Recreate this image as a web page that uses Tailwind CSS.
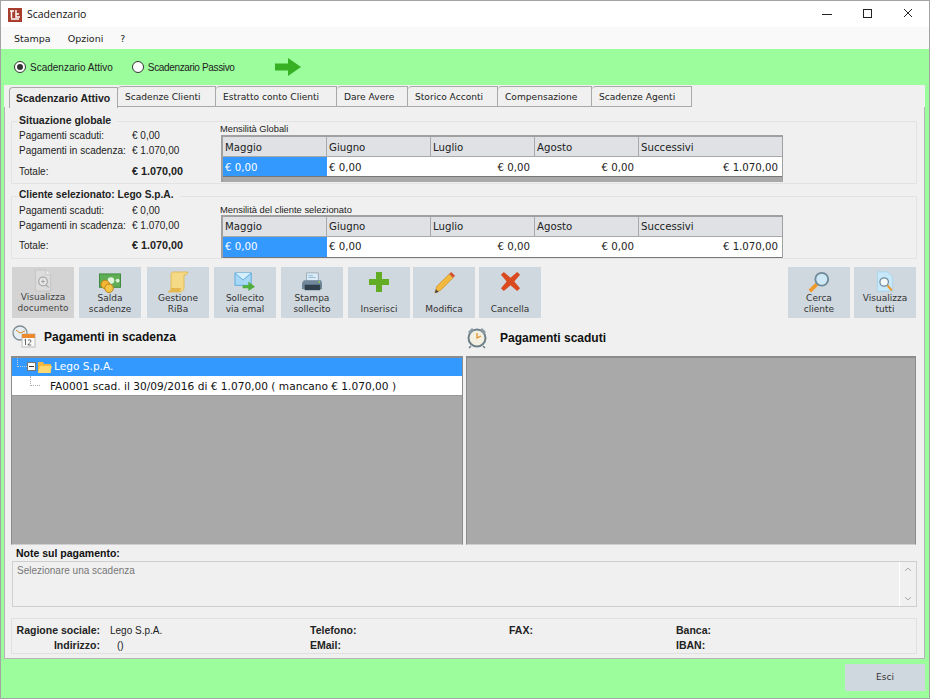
<!DOCTYPE html>
<html lang="it">
<head>
  <meta charset="UTF-8">
  <title>Scadenzario</title>
  <script src="https://cdn.jsdelivr.net/npm/@tailwindcss/browser@4"></script>
</head>
<body class="w-[930px] h-[699px] overflow-hidden bg-[#9bfd9b] font-['Liberation_Sans',sans-serif] text-[10px] text-[#222]">
<div class="w-[930px] h-[699px] border border-[#a3a3a3] flex flex-col">

  <!-- title bar -->
  <div class="h-[26px] bg-white flex items-center shrink-0">
    <svg class="ml-[7px] mt-[1px]" width="14" height="14" viewBox="0 0 14 14"><rect width="14" height="14" fill="#a83f2e"/><path d="M2 3h4M3.500 3v7M8 2v7h4M8 6h3M3 11h8" stroke="#fff" stroke-width="1.400" fill="none"/></svg>
    <span class="ml-[5px] mt-[1px] text-[10.500px] font-['Open_Sans',sans-serif] text-[#111]">Scadenzario</span>
    <svg class="ml-auto" width="120" height="26" viewBox="0 0 120 26"><path d="M13 13.500h10" stroke="#222"/><rect x="54.500" y="8.500" width="8" height="8" fill="none" stroke="#222"/><path d="M95 8l8 8M103 8l-8 8" stroke="#222"/></svg>
  </div>

  <!-- menu -->
  <div class="h-[22px] bg-[#f9f9f9] flex items-center pl-[13px] pt-[3px] font-['DejaVu_Sans',sans-serif] text-[9.500px] shrink-0">
    <span>Stampa</span><span class="ml-[17px]">Opzioni</span><span class="ml-[17px]">?</span>
  </div>

  <!-- radios -->
  <div class="h-[36px] flex items-center pl-[13px] shrink-0">
    <span class="w-[12px] h-[12px] rounded-full border border-[#333] bg-white flex items-center justify-center"><span class="w-[6px] h-[6px] rounded-full bg-[#333]"></span></span>
    <span class="ml-[4px]">Scadenzario Attivo</span>
    <span class="ml-[19px] w-[12px] h-[12px] rounded-full border border-[#333] bg-white"></span>
    <span class="ml-[4px] tracking-[-0.35px]">Scadenzario Passivo</span>
    <svg class="ml-[40px]" width="26" height="18" viewBox="0 0 26 18"><path d="M0 5.500h13V0l13 9-13 9v-5.500H0z" fill="#37b024"/></svg>
  </div>

  <!-- tab panel -->
  <div class="ml-[3px] w-[921px] h-[574px] bg-[#f0f0f0] shrink-0 flex flex-col">
    <div class="h-[22px] flex items-end pl-[5px] shrink-0 font-['DejaVu_Sans',sans-serif] text-[9.100px] whitespace-nowrap">
      <div class="w-[109px] h-[21px] bg-[#f0f0f0] border border-b-0 border-[#a9a9a9] rounded-tl-[4px] font-['Liberation_Sans',sans-serif] text-[10.500px] font-bold flex items-center pl-[6px] pt-[1px] z-10 -mb-px">Scadenzario Attivo</div>
      <div class="w-[98px] h-[21px] border-t border-r border-b border-[#a9a9a9] rounded-tl-[4px] flex items-center pl-[7px] pt-[3px]">Scadenze Clienti</div>
      <div class="w-[121px] h-[21px] border-t border-r border-b border-[#a9a9a9] rounded-tl-[4px] flex items-center pl-[7px] pt-[3px]">Estratto conto Clienti</div>
      <div class="w-[71px] h-[21px] border-t border-r border-b border-[#a9a9a9] rounded-tl-[4px] flex items-center pl-[7px] pt-[3px]">Dare Avere</div>
      <div class="w-[90px] h-[21px] border-t border-r border-b border-[#a9a9a9] rounded-tl-[4px] flex items-center pl-[7px] pt-[3px]">Storico Acconti</div>
      <div class="w-[94px] h-[21px] border-t border-r border-b border-[#a9a9a9] rounded-tl-[4px] flex items-center pl-[7px] pt-[3px]">Compensazione</div>
      <div class="w-[100px] h-[21px] border-t border-r border-b border-[#a9a9a9] rounded-tl-[4px] flex items-center pl-[7px] pt-[3px]">Scadenze Agenti</div>
    </div>

    <div class="flex-1 border border-t-0 border-[#b4b4b4] border-t-[#a9a9a9] pl-[6px] pr-[7px] flex flex-col relative">

      <!-- situazione globale -->
      <div class="relative mt-[14px] h-[63px] border border-[#e3e3e3] flex whitespace-nowrap">
        <b class="absolute left-[7px] -top-[8px] bg-[#f0f0f0] pr-[6px] leading-[12px] text-[10.500px]">Situazione globale</b>
        <div class="w-[209px] pl-[7px] pt-[6px] shrink-0">
          <div class="flex h-[15px] items-center"><span class="w-[113px]">Pagamenti scaduti:</span><span>€ 0,00</span></div>
          <div class="flex h-[15px] items-center"><span class="w-[113px]">Pagamenti in scadenza:</span><span>€ 1.070,00</span></div>
          <div class="flex h-[15px] items-center mt-[6px]"><span class="w-[113px]">Totale:</span><b class="text-[10.800px]">€ 1.070,00</b></div>
        </div>
        <div>
          <div class="h-[13px] leading-[13px] pt-[1px] -ml-[1px] text-[9.300px]">Mensilità Globali</div>
          <div class="w-[562px] h-[47px] border-2 border-r border-b-0 border-[#a0a0a0] bg-[#a9a9a9] font-['DejaVu_Sans',sans-serif] text-[10.200px]">
            <div class="flex h-[20px] bg-[#dfe1e5] border-b border-[#a9a9a9]">
              <div class="w-[104px] border-r border-[#a9a9a9] pl-[2px] leading-[21px]">Maggio</div>
              <div class="w-[104px] border-r border-[#a9a9a9] pl-[2px] leading-[21px]">Giugno</div>
              <div class="w-[104px] border-r border-[#a9a9a9] pl-[2px] leading-[21px]">Luglio</div>
              <div class="w-[104px] border-r border-[#a9a9a9] pl-[2px] leading-[21px]">Agosto</div>
              <div class="flex-1 pl-[2px] leading-[21px]">Successivi</div>
            </div>
            <div class="flex h-[20px] bg-white border-b border-[#777] leading-[21px]">
              <div class="w-[104px] bg-[#3399ff] text-white pl-[2px]">€ 0,00</div>
              <div class="w-[104px] pl-[2px]">€ 0,00</div>
              <div class="w-[104px] text-right pr-[5px]">€ 0,00</div>
              <div class="w-[104px] text-right pr-[5px]">€ 0,00</div>
              <div class="flex-1 text-right pr-[4px]">€ 1.070,00</div>
            </div>
          </div>
        </div>
      </div>

      <!-- cliente selezionato -->
      <div class="relative mt-[12px] h-[63px] border border-[#e3e3e3] flex whitespace-nowrap">
        <b class="absolute left-[7px] -top-[8px] bg-[#f0f0f0] pr-[6px] leading-[12px] text-[10.200px]">Cliente selezionato: Lego S.p.A.</b>
        <div class="w-[209px] pl-[7px] pt-[6px] shrink-0">
          <div class="flex h-[15px] items-center"><span class="w-[113px]">Pagamenti scaduti:</span><span>€ 0,00</span></div>
          <div class="flex h-[15px] items-center"><span class="w-[113px]">Pagamenti in scadenza:</span><span>€ 1.070,00</span></div>
          <div class="flex h-[15px] items-center mt-[5px]"><span class="w-[113px]">Totale:</span><b class="text-[10.800px]">€ 1.070,00</b></div>
        </div>
        <div>
          <div class="h-[18px] leading-[13px] pt-[6px] -ml-[1px] text-[9.400px]">Mensilità del cliente selezionato</div>
          <div class="w-[562px] h-[43px] border-2 border-r border-b-0 border-[#a0a0a0] bg-[#f0f0f0] font-['DejaVu_Sans',sans-serif] text-[10.200px]">
            <div class="flex h-[20px] bg-[#dfe1e5] border-b border-[#a9a9a9]">
              <div class="w-[104px] border-r border-[#a9a9a9] pl-[2px] leading-[20px]">Maggio</div>
              <div class="w-[104px] border-r border-[#a9a9a9] pl-[2px] leading-[20px]">Giugno</div>
              <div class="w-[104px] border-r border-[#a9a9a9] pl-[2px] leading-[20px]">Luglio</div>
              <div class="w-[104px] border-r border-[#a9a9a9] pl-[2px] leading-[20px]">Agosto</div>
              <div class="flex-1 pl-[2px] leading-[20px]">Successivi</div>
            </div>
            <div class="flex h-[21px] bg-white border-b border-[#777] leading-[20px]">
              <div class="w-[104px] bg-[#3399ff] text-white pl-[2px]">€ 0,00</div>
              <div class="w-[104px] pl-[2px]">€ 0,00</div>
              <div class="w-[104px] text-right pr-[5px]">€ 0,00</div>
              <div class="w-[104px] text-right pr-[5px]">€ 0,00</div>
              <div class="flex-1 text-right pr-[4px]">€ 1.070,00</div>
            </div>
          </div>
        </div>
      </div>

      <!-- toolbar -->
      <div class="mt-[8px] ml-[1px] mr-[1px] h-[51px] flex text-center leading-[11px] text-[#333] shrink-0 font-['DejaVu_Sans',sans-serif] text-[9px] whitespace-nowrap">
        <div class="w-[62px] bg-[#d3d3d3] flex flex-col items-center pt-[2px] pb-[4px] text-[#444]">
          <svg width="20" height="23" viewBox="0 0 20 24"><path d="M2 1h11l5 5v17H2z" fill="#dcdcdc" stroke="#c4c4c4"/><path d="M13 1v5h5" fill="#eee" stroke="#c4c4c4"/><circle cx="10" cy="13" r="4.500" fill="#e8e8e8" stroke="#a8a8a8" stroke-width="1.300"/><path d="M8 13h4M10 11v4M13 16.500l3 3" stroke="#a8a8a8" stroke-width="1.200"/></svg>
          <span class="mt-auto">Visualizza<br>documento</span>
        </div>
        <div class="ml-[5px] w-[62px] bg-[#cfd8de] flex flex-col items-center pt-[6px] pb-[3px]">
          <svg width="24" height="20" viewBox="0 0 24 21"><rect x="1" y="1" width="22" height="14" fill="#5fae55" stroke="#3b8a3a"/><circle cx="13" cy="8" r="3.500" fill="#dff3d8"/><circle cx="20" cy="8" r="2" fill="#dff3d8"/><circle cx="7" cy="12" r="4.500" fill="#f2b632" stroke="#b9801a"/><circle cx="11" cy="16" r="4.500" fill="#f5c545" stroke="#b9801a"/></svg>
          <span class="mt-auto">Salda<br>scadenze</span>
        </div>
        <div class="ml-[6px] w-[62px] bg-[#cfd8de] flex flex-col items-center pt-[4px] pb-[3px]">
          <svg width="22" height="22" viewBox="0 0 22 22"><path d="M6 1h15l-2 3h-2v13c0 2-2 4-4 4H1c2-1 3-2 3-4V3c0-1 1-2 2-2z" fill="#f4d987" stroke="#e2b648" stroke-width=".8"/><path d="M1 21c2-1 3-2 3-4h10c0 2-1 4-2 4z" fill="#e5b84e"/></svg>
          <span class="mt-auto">Gestione<br>RiBa</span>
        </div>
        <div class="ml-[5px] w-[62px] bg-[#cfd8de] flex flex-col items-center pt-[5px] pb-[3px]">
          <svg width="22" height="20" viewBox="0 0 23 21"><path d="M1 1h17v13H1z" fill="#a7d8f5" stroke="#5aa9dc"/><path d="M1 1l8.500 7.500L18 1" fill="#d5eefb" stroke="#5aa9dc"/><path d="M9 14h6v-4l7 5.500-7 4.500v-3H9z" fill="#4fae3c"/></svg>
          <span class="mt-auto">Sollecito<br>via emal</span>
        </div>
        <div class="ml-[5px] w-[62px] bg-[#cfd8de] flex flex-col items-center pt-[5px] pb-[3px]">
          <svg width="22" height="20" viewBox="0 0 24 22"><path d="M6 1h13v9H6z" fill="#dcecf7" stroke="#9ab"/><path d="M8 4h5M8 6h8" stroke="#8fb6d6"/><path d="M3 9h19l1 3v7H1v-7z" fill="#6f8798"/><rect x="4" y="14" width="17" height="6" fill="#2f3f4c"/><circle cx="20" cy="11" r="1" fill="#8fd14f"/></svg>
          <span class="mt-auto">Stampa<br>sollecito</span>
        </div>
        <div class="ml-[5px] w-[62px] bg-[#cfd8de] flex flex-col items-center pt-[4px] pb-[3px]">
          <svg width="22" height="22" viewBox="0 0 22 22"><path d="M8 1h6v7h7v6h-7v7H8v-7H1V8h7z" fill="#62ad23"/></svg>
          <span class="mt-auto">Inserisci</span>
        </div>
        <div class="ml-[3px] w-[62px] bg-[#cfd8de] flex flex-col items-center pt-[4px] pb-[3px]">
          <svg width="23" height="23" viewBox="0 0 24 24"><path d="M2 23l2-7L17 3l4 4L8 20z" fill="#f3b93f" stroke="#c98b23" stroke-width=".7"/><path d="M17 3l2-2 4 4-2 2z" fill="#d2502e"/><path d="M2 23l1-4 3 3z" fill="#444"/></svg>
          <span class="mt-auto">Modifica</span>
        </div>
        <div class="ml-[4px] w-[62px] bg-[#cfd8de] flex flex-col items-center pt-[4px] pb-[3px]">
          <svg width="21" height="21" viewBox="0 0 22 22"><path d="M4 1l7 6 7-6 3 3-6 7 6 7-3 3-7-6-7 6-3-3 6-7-6-7z" fill="#d94a1e"/></svg>
          <span class="mt-auto">Cancella</span>
        </div>
        <div class="ml-auto w-[62px] bg-[#cfd8de] flex flex-col items-center pt-[4px] pb-[3px]">
          <svg width="22" height="22" viewBox="0 0 24 24"><path d="M2 22l8-8" stroke="#ee9a2e" stroke-width="4"/><circle cx="15" cy="9" r="7" fill="#cfe8f5" stroke="#6f8a99" stroke-width="2"/></svg>
          <span class="mt-auto">Cerca<br>cliente</span>
        </div>
        <div class="ml-[4px] w-[62px] bg-[#cfd8de] flex flex-col items-center pt-[4px] pb-[3px]">
          <svg width="18" height="23" viewBox="0 0 20 26"><path d="M1 1h12l6 6v17H1z" fill="#c6e8f8" stroke="#a6d3ea"/><circle cx="9" cy="13" r="5" fill="#f3f8fb" stroke="#6f8a99" stroke-width="1.500"/><path d="M13 17l5 6" stroke="#ee9a2e" stroke-width="2.500"/></svg>
          <span class="mt-auto">Visualizza<br>tutti</span>
        </div>
      </div>

      <!-- elenchi -->
      <div class="flex mt-[7px] h-[31px] shrink-0 text-[12px] font-bold text-[#111]">
        <div class="w-[455px] flex items-start">
          <svg class="ml-[1px]" width="24" height="24" viewBox="0 0 24 24"><circle cx="8" cy="8" r="7" fill="#e6eef3" stroke="#7d8d96" stroke-width="1.300"/><path d="M8 8L4 5M8 8l5-2" stroke="#d98a22"/><rect x="10" y="9" width="13" height="13" fill="#fafafa" stroke="#bbb"/><rect x="10" y="9" width="13" height="4" fill="#ee8a2e"/><path d="M12.500 15l1-.8v5.800M16 15.500c1-1.200 3-.8 3 .5 0 1.500-3 2.500-3 4h3.200" fill="none" stroke="#444" stroke-width=".8"/></svg>
          <span class="ml-[8px] mt-[3px]">Pagamenti in scadenza</span>
        </div>
        <div class="flex items-start">
          <svg class="mt-[1px]" width="22" height="23" viewBox="0 0 22 23"><circle cx="11" cy="12" r="8.500" fill="#f3f0e2" stroke="#6d7f88" stroke-width="2"/><path d="M11 7v5l4-2" stroke="#e0902a" fill="none" stroke-width="1.300"/><path d="M2 6l4-4 2 2-4 4zM20 6l-4-4-2 2 4 4z" fill="#8a9aa3"/><path d="M5 20l-2 2M17 20l2 2" stroke="#6d7f88" stroke-width="1.500"/></svg>
          <span class="ml-[12px] mt-[4px]">Pagamenti scaduti</span>
        </div>
      </div>

      <div class="flex h-[189px] shrink-0">
        <div class="w-[452px] border-t-[2px] border-x border-b border-[#8c8c8c] border-b-[#d0d0d0] bg-[#a9a9a9] font-['DejaVu_Sans',sans-serif] text-[10.600px]">
          <div class="h-[18px] bg-[#3399ff] text-white flex items-center relative">
            <span class="absolute left-[5px] top-0 h-[9px] w-[10px] border-l border-b border-dotted border-[#bcd]"></span>
            <span class="absolute left-[15px] top-[4px] w-[9px] h-[9px] border border-[#777] bg-white flex items-center justify-center"><span class="w-[5px] h-px bg-[#333]"></span></span>
            <svg class="ml-[26px]" width="14" height="13" viewBox="0 0 14 13"><path d="M0 1h5l1 2h7v9H0z" fill="#f4b93c"/><path d="M2 5h12l-2 7H0z" fill="#fbd871"/></svg>
            <span class="ml-[2px]">Lego S.p.A.</span>
          </div>
          <div class="h-[20px] bg-white border-b border-[#999] flex items-center relative text-[#111] whitespace-nowrap pt-[2px]">
            <span class="absolute left-[18px] top-0 h-[10px] w-[10px] border-l border-b border-dotted border-[#aaa]"></span>
            <span class="ml-[38px]">FA0001 scad. il 30/09/2016 di € 1.070,00 ( mancano € 1.070,00 )</span>
          </div>
        </div>
        <div class="ml-[3px] w-[450px] border-t-[2px] border-x border-[#8c8c8c] border-b border-b-[#d0d0d0] bg-[#a9a9a9]"></div>
      </div>

      <!-- note -->
      <b class="mt-[1px] ml-[5px] h-[15px] leading-[14px] text-[10.500px] text-[#111]">Note sul pagamento:</b>
      <div class="ml-[1px] w-[905px] h-[46px] border border-[#cfcfcf] flex text-[#777] shrink-0">
        <span class="pl-[4px] pt-[1px]">Selezionare una scadenza</span>
        <div class="ml-auto w-[16px] border-l border-white flex flex-col items-center justify-between py-[5px] mr-[1px]">
          <svg width="8" height="5" viewBox="0 0 8 5"><path d="M1 4l3-3 3 3" fill="none" stroke="#aaa"/></svg>
          <svg width="8" height="5" viewBox="0 0 8 5"><path d="M1 1l3 3 3-3" fill="none" stroke="#aaa"/></svg>
        </div>
      </div>

      <!-- anagrafica -->
      <div class="mt-[11px] w-[906px] h-[36px] border border-[#e0e0e0] grid grid-cols-[88px_204px_199px_173px_1fr] grid-rows-[15px_15px] pt-[4px] leading-[15px] whitespace-nowrap shrink-0">
        <b class="text-right text-[10.500px]">Ragione sociale:</b><span class="pl-[10px]">Lego S.p.A.</span><b class="pl-[6px] text-[10.500px]">Telefono:</b><b class="pl-[6px] text-[10.500px]">FAX:</b><b class="text-[10.500px]">Banca:</b>
        <b class="text-right text-[10.500px]">Indirizzo:</b><span class="pl-[17px]">()</span><b class="pl-[6px] text-[10.500px]">EMail:</b><span></span><b class="text-[10.500px]">IBAN:</b>
      </div>
    </div>
  </div>

  <div class="flex justify-end mt-[5px] pr-[4px]">
    <div class="w-[80px] h-[27px] bg-[#cfd8de] flex items-center justify-center font-['DejaVu_Sans',sans-serif] text-[9px] text-[#333]">Esci</div>
  </div>
</div>
</body>
</html>
